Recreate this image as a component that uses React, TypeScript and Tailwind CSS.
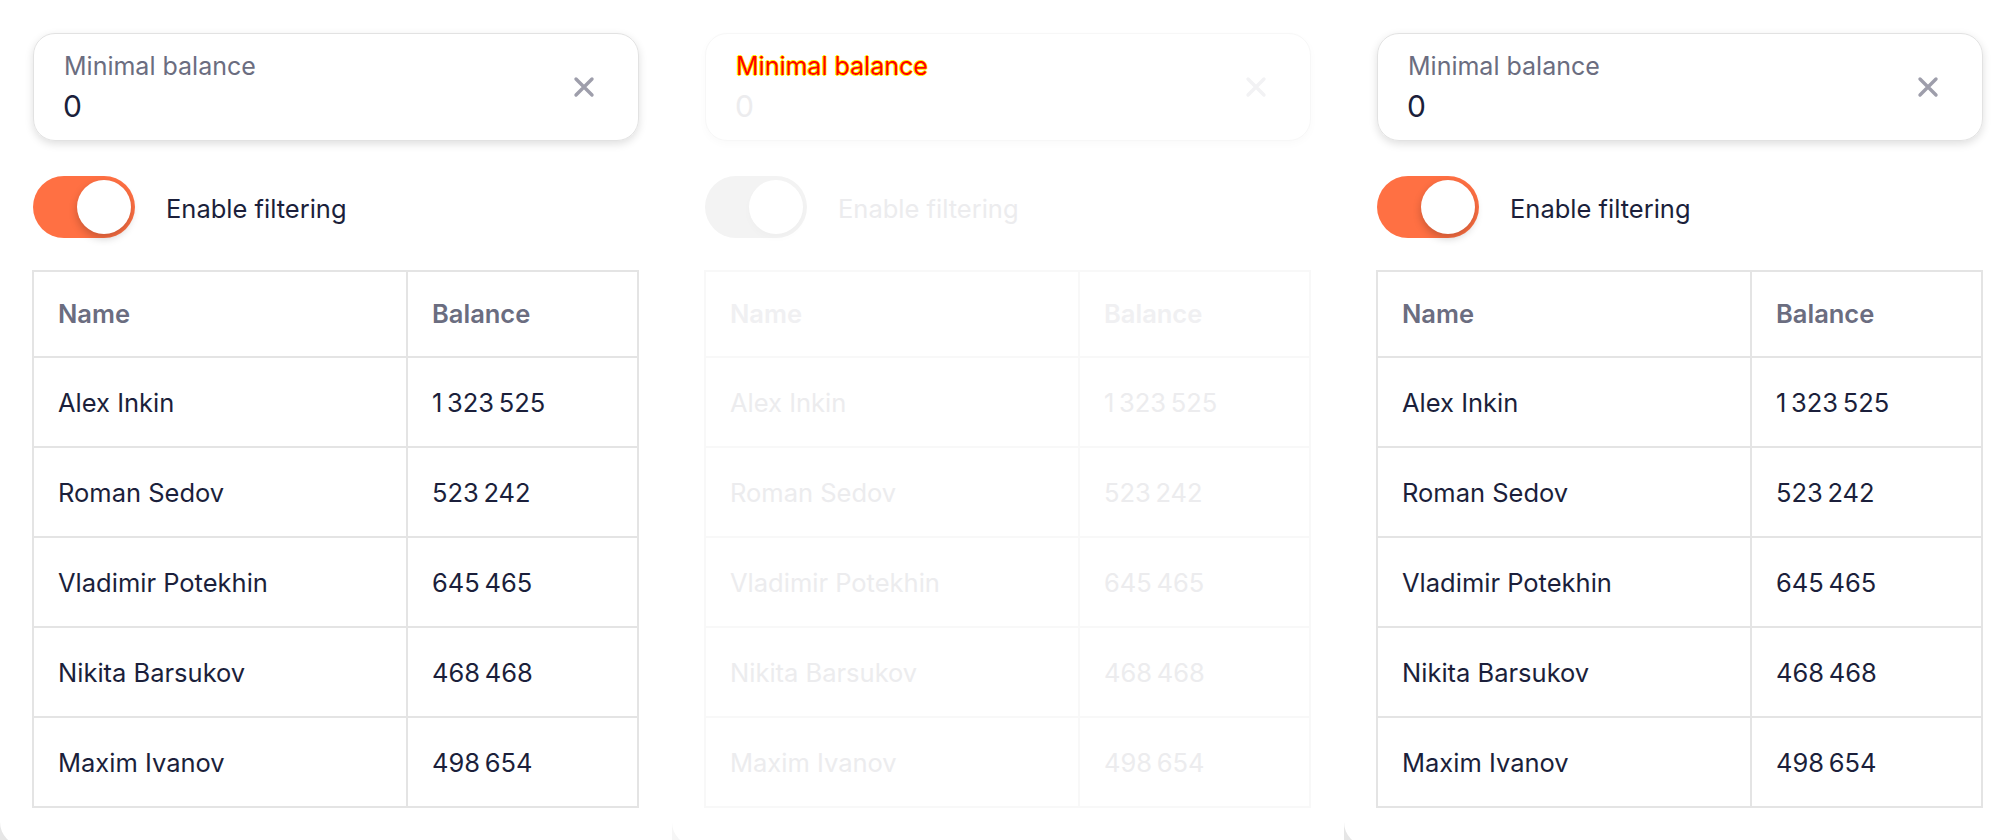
import React from 'react'

type Row = { name: string; balance: string }

const rows: Row[] = [
  { name: 'Alex Inkin', balance: '1\u2009323\u2009525' },
  { name: 'Roman Sedov', balance: '523\u2009242' },
  { name: 'Vladimir Potekhin', balance: '645\u2009465' },
  { name: 'Nikita Barsukov', balance: '468\u2009468' },
  { name: 'Maxim Ivanov', balance: '498\u2009654' },
]

const font = { fontFamily: 'Inter, "Noto Sans", sans-serif' }

const CloseIcon = ({ color }: { color: string }) => (
  <svg width="22" height="22" viewBox="0 0 22 22" fill="none">
    <path d="M3 3 L19 19 M19 3 L3 19" stroke={color} strokeWidth="3.4" strokeLinecap="round" />
  </svg>
)

const FilterCard: React.FC<{ faded?: boolean; corner: string }> = ({ faded, corner }) => {
  const text = faded ? 'text-[#ececee]' : 'text-[#1b1f3b]'
  const head = faded ? 'text-[#f0f0f2]' : 'text-[#6b6d80]'
  const line = faded ? 'border-[#f8f8f8]' : 'border-[#e4e4e4]'

  return (
    <div className={`w-[672px] h-[840px] overflow-hidden ${corner}`}>
      <div className="h-[846px] bg-white rounded-bl-[24px] px-[33px] pt-[33px]" style={font}>
        {/* input */}
        <div
          className={`h-[108px] rounded-[22px] border flex items-center pl-[30px] pr-[43px] ${
            faded
              ? 'border-[#f7f7f7] shadow-[0_3px_8px_rgba(0,0,0,0.025)]'
              : 'border-[#e2e2e2] shadow-[0_3px_8px_rgba(0,0,0,0.13)]'
          }`}
        >
          <div className="flex-1 flex flex-col gap-[7px]">
            {faded ? (
              <span className="text-[25px] leading-[30px] text-[#ff0000] [text-shadow:1px_0_0_#ffee00,-1px_0_0_#ffee00,0_1px_0_#ffee00,0_-1px_0_#ffee00]">
                Minimal balance
              </span>
            ) : (
              <span className="text-[25px] leading-[30px] text-[#6b6d80]">Minimal balance</span>
            )}
            <span className={`text-[30px] leading-[36px] -ml-[1px] ${text}`}>0</span>
          </div>
          <CloseIcon color={faded ? '#f2f2f4' : '#9e9eab'} />
        </div>

        {/* toggle */}
        <div className="mt-[35px] flex items-center gap-[31px] h-[62px]">
          <div
            className={`w-[102px] h-[62px] rounded-full p-[4px] flex justify-end ${
              faded ? 'bg-[#f3f3f3]' : 'bg-[#ff7043]'
            }`}
          >
            <div
              className={`w-[54px] h-[54px] rounded-full bg-white ${
                faded ? 'shadow-[0_4px_8px_rgba(0,0,0,0.02)]' : 'shadow-[0_4px_8px_rgba(0,0,0,0.22)]'
              }`}
            />
          </div>
          <span className={`pt-[4px] text-[25.5px] ${text}`}>Enable filtering</span>
        </div>

        {/* table */}
        <table className={`mt-[32px] -ml-[1px] w-[607px] border-collapse border-2 ${line}`}>
          <thead>
            <tr>
              <th className={`w-[374px] h-[86px] border-2 ${line} pl-[24px] text-left font-semibold text-[25.5px] ${head}`}>
                Name
              </th>
              <th className={`h-[86px] border-2 ${line} pl-[24px] text-left font-semibold text-[25.5px] ${head}`}>
                Balance
              </th>
            </tr>
          </thead>
          <tbody>
            {rows.map(r => (
              <tr key={r.name}>
                <td className={`h-[90px] border-2 ${line} pl-[24px] pt-[2px] text-[25.5px] ${text}`}>{r.name}</td>
                <td className={`h-[90px] border-2 ${line} pl-[24px] pt-[2px] text-[25.5px] ${text}`}>{r.balance}</td>
              </tr>
            ))}
          </tbody>
        </table>
      </div>
    </div>
  )
}

export default function App() {
  return (
    <div className="w-[2016px] h-[840px] flex overflow-hidden bg-white">
      <FilterCard corner="bg-[#e6e6e6]" />
      <FilterCard faded corner="bg-[#f6f6f6]" />
      <FilterCard corner="bg-[#e6e6e6]" />
    </div>
  )
}
